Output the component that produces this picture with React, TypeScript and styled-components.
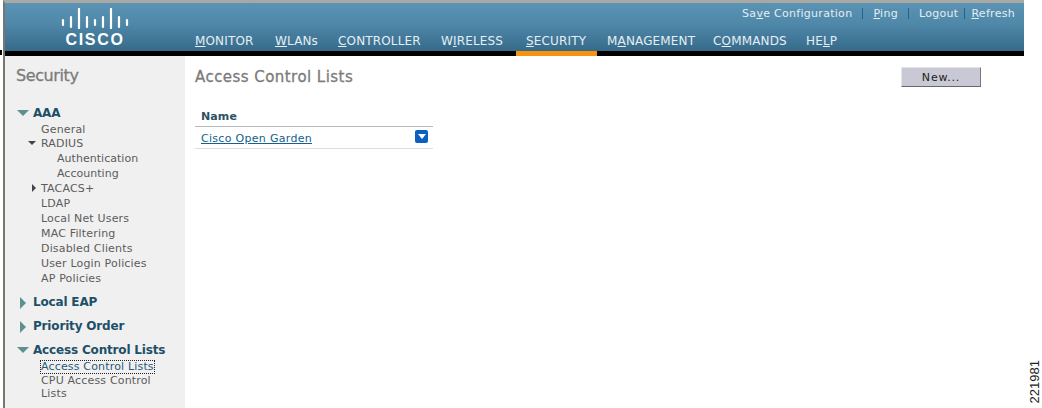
import styled, { createGlobalStyle } from "styled-components";

const GlobalStyle = createGlobalStyle`
  html, body {
    margin: 0;
    padding: 0;
    background: #fff;
  }
  body {
    font-family: "DejaVu Sans", Verdana, sans-serif;
  }
`;

const logoTicks = [
  [2, 12, 17],
  [10, 9, 19],
  [18, 1, 20],
  [26, 9, 19],
  [34, 12, 17],
  [42, 9, 19],
  [50, 1, 20],
  [58, 9, 19],
  [66, 12, 17],
];

const CiscoLogo = () => (
  <svg width="68" height="21" viewBox="0 0 68 21">
    {logoTicks.map(([x, y1, y2]) => (
      <line key={x} x1={x} x2={x} y1={y1} y2={y2} stroke="#fff" strokeWidth="2.2" strokeLinecap="round" />
    ))}
  </svg>
);

const Underlined = ({ text, at }: { text: string; at: number }) => (
  <>
    {text.slice(0, at)}
    <u>{text[at]}</u>
    {text.slice(at + 1)}
  </>
);

const navItems = [
  { label: "MONITOR", at: 0, width: 80 },
  { label: "WLANs", at: 0, width: 63 },
  { label: "CONTROLLER", at: 0, width: 103 },
  { label: "WIRELESS", at: 1, width: 85 },
  { label: "SECURITY", at: 0, width: 81, active: true },
  { label: "MANAGEMENT", at: 1, width: 106 },
  { label: "COMMANDS", at: 1, width: 93 },
  { label: "HELP", at: 2, width: 50 },
];

const App = () => {
  return (
    <Page>
      <GlobalStyle />
      <Frame>
        <Header>
          <LogoBlock>
            <CiscoLogo />
            <LogoWord>CISCO</LogoWord>
          </LogoBlock>
          <HeaderMain>
            <TopLinks>
              <TopLink>
                <Underlined text="Save Configuration" at={2} />
              </TopLink>
              <Sep $gap={10} />
              <TopLink>
                <Underlined text="Ping" at={0} />
              </TopLink>
              <Sep $gap={10} />
              <TopLink>
                <Underlined text="Logout" at={2} />
              </TopLink>
              <Sep $gap={6} />
              <TopLink>
                <Underlined text="Refresh" at={0} />
              </TopLink>
            </TopLinks>
            <Nav>
              {navItems.map((n) => (
                <NavItem key={n.label} $width={n.width} $active={n.active}>
                  <Underlined text={n.label} at={n.at} />
                </NavItem>
              ))}
            </Nav>
          </HeaderMain>
        </Header>
        <Body>
          <Sidebar>
            <SideTitle>Security</SideTitle>
            <Section $top={20}>
              <SectionHead>
                <BigArrow $open />
                AAA
              </SectionHead>
              <SubList>
                <FirstItem>General</FirstItem>
                <SubItem>
                  <SmallArrow $open />
                  RADIUS
                </SubItem>
                <DeepItem>Authentication</DeepItem>
                <DeepItem>Accounting</DeepItem>
                <SubItem>
                  <SmallArrow />
                  TACACS+
                </SubItem>
                <SubItem>LDAP</SubItem>
                <SubItem>Local Net Users</SubItem>
                <SubItem>MAC Filtering</SubItem>
                <SubItem>Disabled Clients</SubItem>
                <SubItem>User Login Policies</SubItem>
                <SubItem>AP Policies</SubItem>
              </SubList>
            </Section>
            <Section $top={9}>
              <SectionHead>
                <BigArrow />
                Local EAP
              </SectionHead>
            </Section>
            <Section $top={9}>
              <SectionHead>
                <BigArrow />
                Priority Order
              </SectionHead>
            </Section>
            <Section $top={9}>
              <SectionHead>
                <BigArrow $open />
                Access Control Lists
              </SectionHead>
              <SubList>
                <FocusedItem>Access Control Lists</FocusedItem>
                <WrapItem>CPU Access Control Lists</WrapItem>
              </SubList>
            </Section>
          </Sidebar>
          <Content>
            <TitleRow>
              <PageTitle>Access Control Lists</PageTitle>
              <NewButton>New...</NewButton>
            </TitleRow>
            <AclTable>
              <AclHead>Name</AclHead>
              <AclRow>
                <AclLink>Cisco Open Garden</AclLink>
                <DropButton>
                  <svg width="8" height="5" viewBox="0 0 8 5">
                    <path d="M0 0h8L4 5z" fill="#fff" />
                  </svg>
                </DropButton>
              </AclRow>
            </AclTable>
          </Content>
        </Body>
      </Frame>
      <FigureMargin>
        <FigureNumber>221981</FigureNumber>
      </FigureMargin>
    </Page>
  );
};

const Page = styled.div`
  display: flex;
  width: 1042px;
  height: 408px;
  overflow: hidden;
`;

const Frame = styled.div`
  position: relative;
  box-sizing: border-box;
  width: 1021px;
  margin-left: 3px;
  display: flex;
  flex-direction: column;
  border-top: 3px solid #a9a9a4;
  border-left: 2px solid #77776f;

  &::before {
    content: "";
    position: absolute;
    left: -5px;
    top: 47px;
    width: 2px;
    height: 5px;
    background: #000;
  }
`;

const Header = styled.div`
  display: flex;
  height: 48px;
  flex: none;
  background: linear-gradient(#5a93b3 0%, #4f87a8 45%, #356a8a 100%);
  border-bottom: 5px solid #000;
`;

const LogoBlock = styled.div`
  width: 180px;
  flex: none;
  display: flex;
  flex-direction: column;
  align-items: center;
  padding-top: 5px;
  box-sizing: border-box;
`;

const LogoWord = styled.div`
  font-family: "Liberation Sans", Arial, sans-serif;
  font-weight: 700;
  font-size: 16px;
  line-height: 17px;
  letter-spacing: 1.7px;
  color: #fff;
  margin-top: 2px;
`;

const HeaderMain = styled.div`
  flex: 1;
  display: flex;
  flex-direction: column;
  justify-content: space-between;
`;

const TopLinks = styled.div`
  display: flex;
  justify-content: flex-end;
  align-items: center;
  padding: 4px 9px 0 0;
  height: 13px;
`;

const TopLink = styled.span`
  font-size: 11px;
  letter-spacing: 0.29px;
  color: #e4edf2;
  white-space: nowrap;
`;

const Sep = styled.span<{ $gap: number }>`
  width: 1px;
  height: 11px;
  background: #27608a;
  margin: 0 ${(p) => p.$gap}px;
`;

const Nav = styled.div`
  display: flex;
  align-items: stretch;
`;

const NavItem = styled.div<{ $width: number; $active?: boolean }>`
  width: ${(p) => p.$width - 10}px;
  flex: none;
  padding-left: 10px;
  height: 21px;
  border-bottom: ${(p) => (p.$active ? "5px solid #f7930e" : "none")};
  margin-bottom: ${(p) => (p.$active ? "-5px" : "0")};
  font-size: 12px;
  line-height: 23px;
  letter-spacing: 0.15px;
  color: #e6eef3;
  white-space: nowrap;
`;

const Body = styled.div`
  flex: 1;
  display: flex;
  min-height: 0;
`;

const Sidebar = styled.div`
  width: 180px;
  flex: none;
  background: #f0f0f0;
  box-sizing: border-box;
  padding: 10px 0 0 11px;
`;

const SideTitle = styled.div`
  font-size: 16px;
  line-height: 20px;
  letter-spacing: -0.4px;
  color: #7b7b7b;
  -webkit-text-stroke: 0.3px #7b7b7b;
`;

const Section = styled.div<{ $top: number }>`
  margin-top: ${(p) => p.$top}px;
`;

const SectionHead = styled.div`
  position: relative;
  padding-left: 17px;
  font-size: 12px;
  font-weight: 700;
  line-height: 15px;
  letter-spacing: -0.17px;
  color: #1d5068;
  white-space: nowrap;
`;

const BigArrow = styled.span<{ $open?: boolean }>`
  position: absolute;
  width: 0;
  height: 0;
  ${(p) =>
    p.$open
      ? `left: 1px; top: 4px;
         border-left: 6px solid transparent;
         border-right: 6px solid transparent;
         border-top: 6px solid #5d9191;`
      : `left: 4px; top: 2px;
         border-top: 6px solid transparent;
         border-bottom: 6px solid transparent;
         border-left: 6px solid #5d9191;`}
`;

const SmallArrow = styled.span<{ $open?: boolean }>`
  position: absolute;
  width: 0;
  height: 0;
  ${(p) =>
    p.$open
      ? `left: -13px; top: 5px;
         border-left: 4px solid transparent;
         border-right: 4px solid transparent;
         border-top: 4px solid #444;`
      : `left: -9px; top: 3px;
         border-top: 4px solid transparent;
         border-bottom: 4px solid transparent;
         border-left: 4px solid #444;`}
`;

const SubList = styled.div`
  padding-left: 25px;
  padding-right: 20px;
`;

const SubItem = styled.div`
  position: relative;
  font-size: 11px;
  line-height: 15px;
  letter-spacing: 0.17px;
  color: #5c5c5c;
  white-space: nowrap;
`;

const FirstItem = styled(SubItem)`
  margin: 1px 0 -1px;
`;

const DeepItem = styled(SubItem)`
  padding-left: 16px;
  letter-spacing: 0.03px;
`;

const FocusedItem = styled(SubItem)`
  width: fit-content;
  line-height: 12px;
  margin-top: 3px;
  outline: 1px dotted #222;
  color: #2a5a78;
`;

const WrapItem = styled(SubItem)`
  white-space: normal;
  line-height: 13px;
  margin-top: 1px;
`;

const Content = styled.div`
  flex: 1;
  padding: 10px 43px 0 10px;
  min-width: 0;
`;

const TitleRow = styled.div`
  display: flex;
  justify-content: space-between;
  align-items: flex-start;
`;

const PageTitle = styled.div`
  font-size: 15px;
  line-height: 22px;
  letter-spacing: 0.45px;
  color: #7b7b7b;
  -webkit-text-stroke: 0.3px #7b7b7b;
`;

const NewButton = styled.button`
  width: 80px;
  height: 20px;
  margin-top: 1px;
  padding: 0;
  font-family: inherit;
  font-size: 11px;
  letter-spacing: 0.8px;
  color: #222;
  background: #c8c9d4;
  border: 1px solid;
  border-color: #e4e4ea #77777c #66666c #e4e4ea;
`;

const AclTable = styled.div`
  width: 238px;
  margin-top: 18px;
`;

const AclHead = styled.div`
  padding: 2px 0 0 6px;
  font-size: 11px;
  font-weight: 700;
  line-height: 18px;
  letter-spacing: 0.1px;
  color: #2c5264;
  border-bottom: 1px solid #b9b9b9;
`;

const AclRow = styled.div`
  display: flex;
  align-items: center;
  justify-content: space-between;
  height: 19px;
  padding: 2px 5px 0 6px;
  border-bottom: 1px solid #dedede;
`;

const AclLink = styled.a`
  font-size: 11px;
  letter-spacing: 0.3px;
  color: #14608f;
  text-decoration: underline;
`;

const DropButton = styled.span`
  width: 13px;
  height: 13px;
  margin-top: -5px;
  border-radius: 2px;
  background: #0b5fc0;
  display: flex;
  align-items: center;
  justify-content: center;
`;

const FigureMargin = styled.div`
  flex: 1;
  display: flex;
  align-items: flex-end;
  justify-content: flex-end;
  padding: 0 0 5px 0;
`;

const FigureNumber = styled.div`
  writing-mode: vertical-rl;
  transform: rotate(180deg);
  font-family: "Liberation Sans", Arial, sans-serif;
  font-size: 13px;
  line-height: 14px;
  color: #222;
`;

export default App;
